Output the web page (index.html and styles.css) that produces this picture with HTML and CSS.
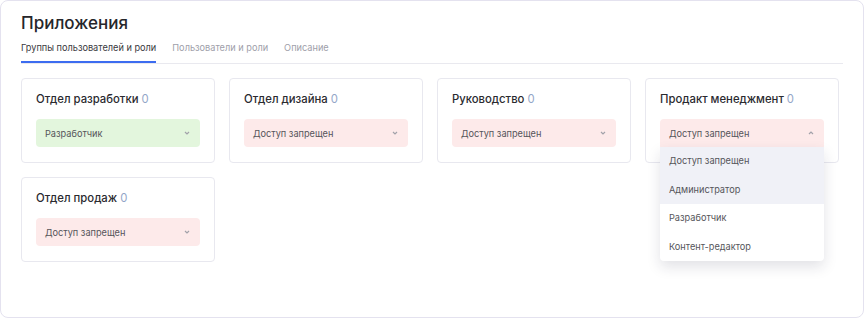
FILE: index.html
```html
<!DOCTYPE html>
<html lang="ru">
<head>
  <meta charset="UTF-8" />
  <title>Приложения</title>
  <link rel="stylesheet" href="styles.css">
</head>
<body>
  <div class="panel">
    <h1 class="title">Приложения</h1>

    <!-- Tabs -->
    <div class="tabs">
      <span class="tab active">Группы пользователей и роли</span>
      <span class="tab">Пользователи и роли</span>
      <span class="tab">Описание</span>
    </div>

    <!-- Groups -->
    <div class="groups">
      <div class="card">
        <div class="card-title">Отдел разработки <span class="count">0</span></div>
        <div class="select allowed">
          <span>Разработчик</span>
          <svg class="chevron" viewBox="0 0 8 8"><polyline points="2,3 4,5 6,3" /></svg>
        </div>
      </div>
      <div class="card">
        <div class="card-title">Отдел дизайна <span class="count">0</span></div>
        <div class="select denied">
          <span>Доступ запрещен</span>
          <svg class="chevron" viewBox="0 0 8 8"><polyline points="2,3 4,5 6,3" /></svg>
        </div>
      </div>
      <div class="card">
        <div class="card-title">Руководство <span class="count">0</span></div>
        <div class="select denied">
          <span>Доступ запрещен</span>
          <svg class="chevron" viewBox="0 0 8 8"><polyline points="2,3 4,5 6,3" /></svg>
        </div>
      </div>
      <div class="card">
        <div class="card-title">Продакт менеджмент <span class="count">0</span></div>
        <div class="select-wrap">
          <div class="select denied open">
            <span>Доступ запрещен</span>
            <svg class="chevron" viewBox="0 0 8 8"><polyline points="2,5 4,3 6,5" /></svg>
          </div>
          <ul class="menu">
            <li class="selected">Доступ запрещен</li>
            <li class="hover">Администратор</li>
            <li>Разработчик</li>
            <li>Контент-редактор</li>
          </ul>
        </div>
      </div>
      <div class="card">
        <div class="card-title">Отдел продаж <span class="count">0</span></div>
        <div class="select denied">
          <span>Доступ запрещен</span>
          <svg class="chevron" viewBox="0 0 8 8"><polyline points="2,3 4,5 6,3" /></svg>
        </div>
      </div>
    </div>
  </div>
</body>
</html>
```

FILE: styles.css
```css
html, body {
  margin: 0;
  padding: 0;
  height: 100%;
  background: #fff;
  font-family: Inter, "Noto Sans", sans-serif;
  color: #222;
}

.panel {
  box-sizing: border-box;
  height: 318px;
  border: 1px solid #e4e2ef;
  border-radius: 8px;
  padding: 11px 20px 0 20px;
}

.title {
  margin: 0;
  font-size: 17px;
  line-height: 22px;
  font-weight: 500;
  color: #26262b;
}

/* Tabs */
.tabs {
  display: flex;
  gap: 16px;
  margin-top: 3px;
  border-bottom: 1px solid #e9e9ef;
}
.tab {
  font-size: 9.2px;
  line-height: 14px;
  padding: 4px 0 6px;
  color: #a0a0aa;
  border-bottom: 2px solid transparent;
}
.tab.active {
  color: #3a3a40;
  border-bottom-color: #3c6cf0;
}

/* Cards */
.groups {
  display: grid;
  grid-template-columns: repeat(4, 194px);
  gap: 14px;
  margin-top: 14px;
}
.card {
  box-sizing: border-box;
  height: 85px;
  border: 1px solid #e8e8ef;
  border-radius: 4px;
  padding: 11px 14px 14px;
}
.card-title {
  font-size: 11.3px;
  line-height: 18px;
  font-weight: 500;
  color: #2a2a2f;
  margin-bottom: 11px;
}
.count {
  color: #93a6c8;
  font-weight: 400;
}

.select {
  display: flex;
  align-items: center;
  justify-content: space-between;
  height: 28px;
  padding: 0 9px;
  border-radius: 4px;
  font-size: 9.2px;
  color: #55555a;
}
.select.allowed {
  background: #e3f6dd;
}
.select.denied {
  background: #fdeaea;
}
.select.open {
  border-radius: 4px 4px 0 0;
}
.chevron {
  width: 8px;
  height: 8px;
  fill: none;
  stroke: #a2a2aa;
  stroke-width: 1.2;
}

/* Dropdown */
.select-wrap {
  position: relative;
}
.menu {
  position: absolute;
  top: 28px;
  left: 0;
  right: 0;
  margin: 0;
  padding: 0;
  list-style: none;
  background: #fff;
  border-radius: 0 0 4px 4px;
  box-shadow: 0 6px 14px rgba(30, 30, 60, 0.13);
  z-index: 2;
}
.menu li {
  height: 28.5px;
  line-height: 28.5px;
  padding: 0 9px;
  font-size: 9.2px;
  color: #55555a;
}
.menu li.selected,
.menu li.hover {
  background: #f0f1f7;
}
```
